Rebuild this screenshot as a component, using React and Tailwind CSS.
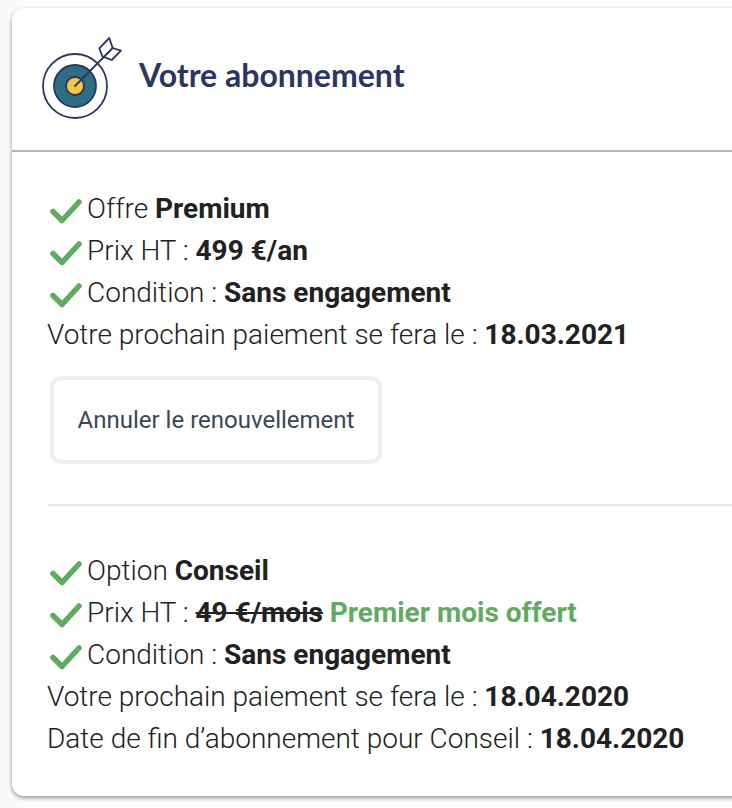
const CHECK_PATH = 'M4 14.5 L13 23.5 L30 5'

function Check() {
  return (
    <svg width="34" height="30" viewBox="0 0 34 30" fill="none" className="ml-[2px] mr-1 shrink-0 translate-y-[3px]">
      <path d={CHECK_PATH} stroke="#5fac5f" strokeWidth="5.5" strokeLinecap="round" strokeLinejoin="round" />
    </svg>
  )
}

function Target() {
  return (
    <svg width="88" height="88" viewBox="0 0 88 88" fill="none" className="mb-[2px] shrink-0">
      <circle cx="34" cy="52" r="32" fill="#fff" stroke="#2c3560" strokeWidth="1.8" />
      <circle cx="34" cy="52" r="21" fill="#2f6d85" stroke="#2c3560" strokeWidth="1.8" />
      <circle cx="34" cy="52" r="9" fill="#f6c545" stroke="#2c3560" strokeWidth="1.8" />
      <path d="M58.3 14.3 L68.3 4 L71.7 14 L80 16.7 L70.7 26 L61.3 22.3 Z" fill="#fff" stroke="#2c3560" strokeWidth="1.8" strokeLinejoin="round" />
      <path d="M34 52 L71.7 14" stroke="#2c3560" strokeWidth="1.8" strokeLinecap="round" />
    </svg>
  )
}

function Line({ check, children }) {
  return (
    <div className="flex h-[42px] items-center whitespace-nowrap">
      {check && <Check />}
      <span>{children}</span>
    </div>
  )
}

export default function App() {
  return (
    <div className="h-[808px] w-[732px] overflow-hidden bg-[#fafafa] pl-3 pt-2 font-['Roboto',sans-serif] text-[28px] font-light text-[#212121]">
      <div className="h-[788px] w-[740px] rounded-l-xl bg-white shadow-[0_2px_4px_rgba(0,0,0,0.4)]">
        <div className="flex h-[144px] items-center border-b-2 border-[#b5b5b5] pl-[29px]">
          <Target />
          <h1 className="mb-2 ml-[10px] font-['Lato',sans-serif] text-[32px] font-bold text-[#2c3560]">Votre abonnement</h1>
        </div>

        <div className="pl-[35px] pt-9">
          <Line check>Offre <b className="font-bold">Premium</b></Line>
          <Line check>Prix HT : <b className="font-bold">499 €/an</b></Line>
          <Line check>Condition : <b className="font-bold">Sans engagement</b></Line>
          <Line>Votre prochain paiement se fera le : <b className="font-bold">18.03.2021</b></Line>

          <button
            type="button"
            className="ml-[3px] mt-5 h-[88px] w-[332px] rounded-xl border-4 border-[#eeeeee] bg-white text-2xl font-normal text-[#3a4658]"
          >
            Annuler le renouvellement
          </button>

          <div className="ml-px mt-10 h-0.5 bg-[#e5e5e5]" />

          <div className="pt-11">
            <Line check>Option <b className="font-bold">Conseil</b></Line>
            <Line check>
              Prix HT : <b className="font-bold line-through">49 €/mois</b>{' '}
              <b className="font-bold text-[#5fac5f]">Premier mois offert</b>
            </Line>
            <Line check>Condition : <b className="font-bold">Sans engagement</b></Line>
            <Line>Votre prochain paiement se fera le : <b className="font-bold">18.04.2020</b></Line>
            <Line>Date de fin d’abonnement pour Conseil : <b className="font-bold">18.04.2020</b></Line>
          </div>
        </div>
      </div>
    </div>
  )
}
